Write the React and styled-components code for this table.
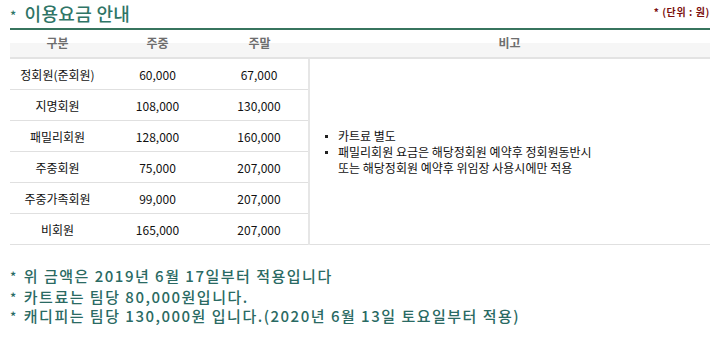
import React from 'react';
import styled, { createGlobalStyle } from 'styled-components';

const GlobalStyle = createGlobalStyle`
  body {
    margin: 0;
    background: #fff;
    font-family: "Noto Sans CJK KR", "Noto Sans", sans-serif;
  }
`;

const Page = styled.div`
  width: 700px;
  padding: 0 10px;
`;

const TitleBar = styled.div`
  display: flex;
  justify-content: space-between;
  align-items: flex-start;
  height: 28px;
  border-bottom: 2px solid #37745e;
`;

const Title = styled.h2`
  margin: 0;
  font-size: 18px;
  font-weight: 500;
  line-height: 27px;
  color: #2f7566;
  letter-spacing: 0.3px;
  span {
    font-size: 13px;
    vertical-align: 0;
    margin-right: 8px;
  }
`;

const Unit = styled.div`
  font-size: 10px;
  font-weight: 700;
  color: #7a0e0e;
  line-height: 12px;
  letter-spacing: 0.6px;
  margin-top: 6px;
`;

const Table = styled.table`
  width: 100%;
  border-collapse: collapse;
  table-layout: fixed;
  font-size: 12px;
  color: #111;
`;

const HeadCell = styled.th`
  height: 27px;
  padding: 0;
  font-size: 12px;
  font-weight: 700;
  color: #6e6e6e;
  background: linear-gradient(#fff 0, #fff 13px, #f6f6f6 13px);
  border-bottom: 2px solid #e3e3e3;
  text-align: center;
  vertical-align: top;
  line-height: 26px;
`;

const Cell = styled.td`
  height: 30px;
  padding: 0;
  text-align: center;
  border-bottom: 1px solid #e0e0e0;
`;

const NoteCell = styled.td`
  padding: 0 0 0 14px;
  border-left: 2px solid #e6e6e6;
  border-bottom: 1px solid #e0e0e0;
  vertical-align: middle;
`;

const NoteList = styled.ul`
  margin: 0;
  padding: 0;
  list-style: none;
  line-height: 16px;
  li {
    position: relative;
    padding-left: 14px;
  }
  li::before {
    content: '';
    position: absolute;
    left: 1px;
    top: 7px;
    width: 3px;
    height: 3px;
    background: #222;
  }
`;

const Footer = styled.div`
  margin-top: 21px;
  display: flex;
  flex-direction: column;
  gap: 0;
  font-size: 15px;
  font-weight: 500;
  line-height: 19px;
  color: #2a6a63;
  letter-spacing: 1.5px;
  p {
    margin: 0;
    height: 19px;
    overflow: hidden;
  }
  p:first-child {
    margin-bottom: 2px;
  }
  span {
    font-size: 13px;
    line-height: 0;
    margin-right: 6px;
  }
`;

const rows = [
  ['정회원(준회원)', '60,000', '67,000'],
  ['지명회원', '108,000', '130,000'],
  ['패밀리회원', '128,000', '160,000'],
  ['주중회원', '75,000', '207,000'],
  ['주중가족회원', '99,000', '207,000'],
  ['비회원', '165,000', '207,000'],
];

export default function App() {
  return (
    <Page>
      <GlobalStyle />
      <TitleBar>
        <Title>
          <span>*</span>이용요금 안내
        </Title>
        <Unit>* (단위 : 원)</Unit>
      </TitleBar>
      <Table>
        <colgroup>
          <col style={{ width: 95 }} />
          <col style={{ width: 105 }} />
          <col style={{ width: 99 }} />
          <col />
        </colgroup>
        <thead>
          <tr>
            <HeadCell>구분</HeadCell>
            <HeadCell>주중</HeadCell>
            <HeadCell>주말</HeadCell>
            <HeadCell>비고</HeadCell>
          </tr>
        </thead>
        <tbody>
          {rows.map((r, i) => (
            <tr key={r[0]}>
              <Cell>{r[0]}</Cell>
              <Cell>{r[1]}</Cell>
              <Cell>{r[2]}</Cell>
              {i === 0 && (
                <NoteCell rowSpan={rows.length}>
                  <NoteList>
                    <li>카트료 별도</li>
                    <li>
                      패밀리회원 요금은 해당정회원 예약후 정회원동반시
                      <br />
                      또는 해당정회원 예약후 위임장 사용시에만 적용
                    </li>
                  </NoteList>
                </NoteCell>
              )}
            </tr>
          ))}
        </tbody>
      </Table>
      <Footer>
        <p><span>*</span>위 금액은 2019년 6월 17일부터 적용입니다</p>
        <p><span>*</span>카트료는 팀당 80,000원입니다.</p>
        <p><span>*</span>캐디피는 팀당 130,000원 입니다.(2020년 6월 13일 토요일부터 적용)</p>
      </Footer>
    </Page>
  );
}
